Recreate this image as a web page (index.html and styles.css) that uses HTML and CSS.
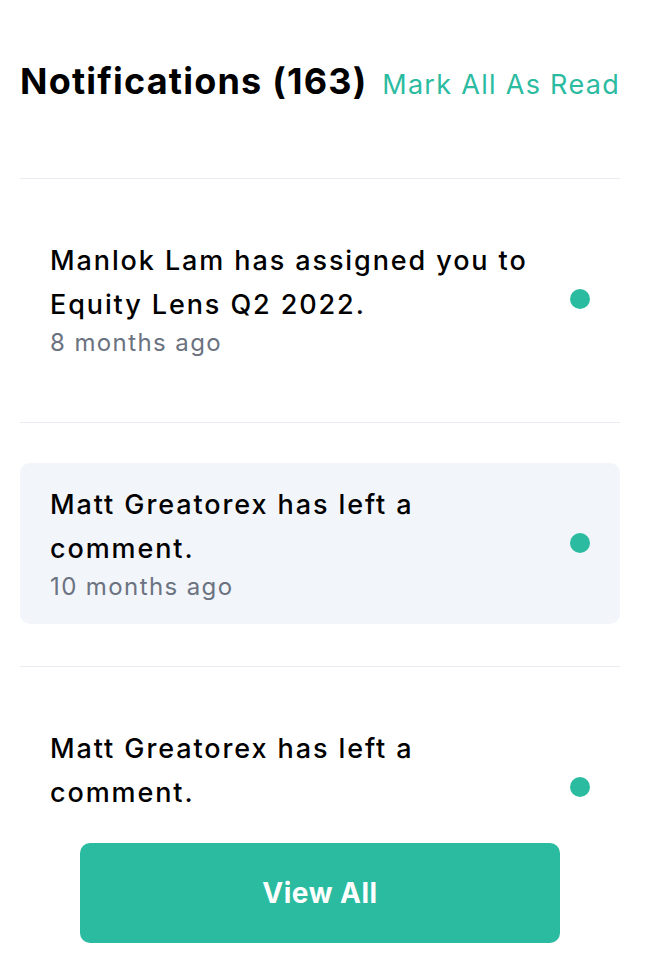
FILE: index.html
```html
<!DOCTYPE html>
<html lang="en">
<head>
    <meta charset="UTF-8">
    <title>Notifications</title>
    <link rel="stylesheet" href="styles.css">
</head>
<body>
    <div class="panel">
        <div class="panel-header">
            <h1>Notifications (163)</h1>
            <a href="#" class="mark-read">Mark All As Read</a>
        </div>
        <div class="list">
            <div class="row">
                <div class="item">
                    <div class="item-text">
                        <p class="message">Manlok Lam has assigned you to Equity Lens Q2 2022.</p>
                        <p class="time">8 months ago</p>
                    </div>
                    <span class="dot"></span>
                </div>
            </div>
            <div class="row">
                <div class="item active">
                    <div class="item-text">
                        <p class="message">Matt Greatorex has left a comment.</p>
                        <p class="time">10 months ago</p>
                    </div>
                    <span class="dot"></span>
                </div>
            </div>
            <div class="row">
                <div class="item">
                    <div class="item-text">
                        <p class="message">Matt Greatorex has left a comment.</p>
                        <p class="time">10 months ago</p>
                    </div>
                    <span class="dot"></span>
                </div>
            </div>
        </div>
        <div class="panel-footer">
            <button class="view-all">View All</button>
        </div>
    </div>
</body>
</html>
```

FILE: styles.css
```css
body {
    margin: 0;
    padding: 0;
    background-color: #ffffff;
    font-family: Inter, "Noto Sans", sans-serif;
    color: #000000;
}
.panel {
    width: 600px;
    height: 100vh;
    padding-left: 20px;
    display: flex;
    flex-direction: column;
}
.panel-header {
    display: flex;
    justify-content: space-between;
    align-items: baseline;
    padding-top: 59px;
    padding-bottom: 71px;
}
.panel-header h1 {
    margin: 0;
    font-size: 36px;
    line-height: 44px;
    font-weight: 700;
    letter-spacing: 1.2px;
}
.mark-read {
    color: #2bbba0;
    font-size: 27px;
    line-height: 44px;
    letter-spacing: 1.3px;
    text-decoration: none;
}
.list {
    flex: 1;
    overflow: hidden;
}
.row {
    border-top: 1px solid #e8ebef;
    padding: 40px 0 42px;
}
.item {
    display: flex;
    align-items: center;
    justify-content: space-between;
    padding: 20px 30px 21px;
    border-radius: 10px;
}
.item.active {
    background-color: #f2f5fa;
}
.item-text {
    width: 490px;
}
.message {
    margin: 0;
    font-size: 27px;
    line-height: 44px;
    font-weight: 500;
    letter-spacing: 1.9px;
}
.time {
    margin: 0;
    font-size: 24px;
    line-height: 32px;
    letter-spacing: 1.4px;
    color: #6b7280;
}
.dot {
    width: 20px;
    height: 20px;
    border-radius: 50%;
    background-color: #2bbba0;
}
.panel-footer {
    padding: 25px 0 27px;
    background-color: #ffffff;
}
.view-all {
    display: block;
    margin: 0 auto;
    width: 480px;
    height: 100px;
    border: none;
    border-radius: 10px;
    background-color: #2bbba0;
    color: #ffffff;
    font-family: Inter, "Noto Sans", sans-serif;
    font-size: 28px;
    font-weight: 700;
    letter-spacing: 0.5px;
    cursor: pointer;
}
```
